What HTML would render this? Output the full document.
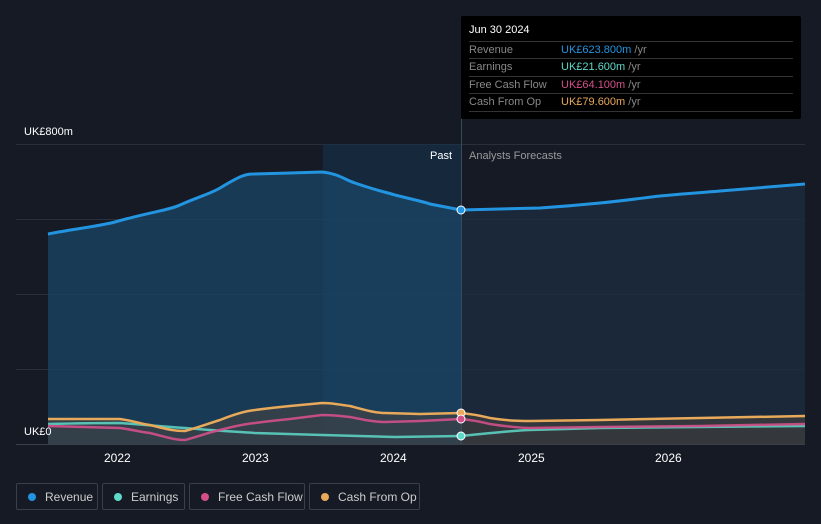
<!DOCTYPE html><html><head><style>
body{margin:0;width:821px;height:524px;background:#151a24;font-family:"Liberation Sans",sans-serif;overflow:hidden;position:relative}
.t{position:absolute;font-size:11px;color:#fff}
.tip{position:absolute;left:461px;top:16px;width:340px;height:103px;background:#000;border-radius:2px}
.tip .r{position:absolute;left:8px;width:324px;border-top:1px solid #333;font-size:11px;color:#888;height:17px;line-height:17px}
.tip .r span{position:absolute;left:92px}
.lg{position:absolute;top:483px;height:27px;border:1px solid #3a3f4a;border-radius:2px;font-size:12px;color:#ccc;line-height:27px;box-sizing:border-box}
.lg i{position:absolute;left:11px;top:9px;width:8px;height:8px;border-radius:50%}
.lg b{font-weight:normal;position:absolute;left:28px}
</style></head><body>
<svg width="821" height="524" style="position:absolute;left:0;top:0">
<defs><linearGradient id="g" x1="0" y1="0" x2="0" y2="1"><stop offset="0" stop-color="#1b4a72" stop-opacity=".8"/><stop offset="1" stop-color="#1b3550" stop-opacity=".6"/></linearGradient></defs>
<g stroke="#2a303b" stroke-width="1"><line x1="16" y1="144.5" x2="805" y2="144.5"/><line x1="16" y1="219.5" x2="805" y2="219.5"/><line x1="16" y1="294.5" x2="805" y2="294.5"/><line x1="16" y1="369.5" x2="805" y2="369.5"/></g>
<rect x="323" y="144" width="138" height="300" fill="#16324c" opacity=".6"/>
<path d="M48,234 C80,228 100,226 115,222 C150,212 170,210 180,205 C200,196 210,194 220,188 C240,176 245,174 253,174 L290,173 L322,172 C340,174 345,180 355,183 C375,190 385,192 395,195 C415,200 425,202 430,204 L461,210 L461,444 L48,444Z" fill="#1a4566" opacity=".75"/>
<path d="M461,210 L500,209 L540,208 C570,206 590,204 600,203 C630,200 650,197 660,196 C690,193 710,192 720,191 L805,184 L805,444 L461,444Z" fill="#1c2c3e" opacity=".8"/>
<path d="M48,419 L120,419 C135,421 140,424 150,425 C170,430 175,431 185,431 C200,427 210,423 220,420 C235,414 245,411 255,410 C270,408 280,407 290,406 L322,403 C335,403 340,405 350,406 C365,410 375,413 385,413 L420,414 L461,413 L490,418 L530,421 L600,420 L700,418 L805,416 L805,444 L48,444Z" fill="#4a4440" opacity=".55"/>
<line x1="16" y1="444.5" x2="805" y2="444.5" stroke="#3a3f4a"/>
<line x1="461.5" y1="119" x2="461.5" y2="444" stroke="#3a4a5a"/>
<path d="M48,234 C80,228 100,226 115,222 C150,212 170,210 180,205 C200,196 210,194 220,188 C240,176 245,174 253,174 L290,173 L322,172 C340,174 345,180 355,183 C375,190 385,192 395,195 C415,200 425,202 430,204 L461,210 L500,209 L540,208 C570,206 590,204 600,203 C630,200 650,197 660,196 C690,193 710,192 720,191 L805,184" fill="none" stroke="#2394e0" stroke-width="3"/>
<path d="M48,424 C90,423 110,423 120,423 C160,426 170,427 185,428 C220,431 240,432 255,433 L322,435 L395,437 L461,436 C500,432 520,430 530,430 L600,428 L805,426" fill="none" stroke="#5fd9c8" stroke-width="2.5" opacity=".85"/>
<path d="M48,426 L120,428 C135,430 140,432 150,433 C170,438 175,440 185,440 C200,436 210,432 220,430 C235,426 245,424 255,423 C270,421 280,420 290,419 L322,415 C335,415 340,416 350,417 C365,420 375,422 385,422 L420,421 L461,419 C480,421 485,423 490,424 C510,427 520,428 530,428 L600,427 L700,426 L805,424" fill="none" stroke="#d2508a" stroke-width="2.5" opacity=".9"/>
<path d="M48,419 L120,419 C135,421 140,424 150,425 C170,430 175,431 185,431 C200,427 210,423 220,420 C235,414 245,411 255,410 C270,408 280,407 290,406 L322,403 C335,403 340,405 350,406 C365,410 375,413 385,413 L420,414 L461,413 C480,415 485,417 490,418 C510,421 520,421 530,421 L600,420 L700,418 L805,416" fill="none" stroke="#e8a95a" stroke-width="2.5"/>
<g stroke="#fff" stroke-width="1"><circle cx="461" cy="210" r="4" fill="#2394e0"/><circle cx="461" cy="413" r="4" fill="#e8a95a"/><circle cx="461" cy="419" r="4" fill="#d2508a"/><circle cx="461" cy="436" r="4" fill="#5fd9c8"/></g>
</svg>
<div class="t" style="left:24px;top:126px">UK£800m</div>
<div class="t" style="left:24px;top:426px">UK£0</div>
<div class="t" style="left:430px;top:150px">Past</div>
<div class="t" style="left:469px;top:150px;color:#999">Analysts Forecasts</div>
<div class="t" style="left:104px;top:451px;font-size:12px">2022</div>
<div class="t" style="left:242px;top:451px;font-size:12px">2023</div>
<div class="t" style="left:380px;top:451px;font-size:12px">2024</div>
<div class="t" style="left:518px;top:451px;font-size:12px">2025</div>
<div class="t" style="left:655px;top:451px;font-size:12px">2026</div>
<div class="tip">
<div style="position:absolute;left:8px;top:8px;font-size:11px;color:#fff">Jun 30 2024</div>
<div class="r" style="top:25px">Revenue<span><em style="font-style:normal;color:#2394e0">UK£623.800m</em> /yr</span></div>
<div class="r" style="top:42px">Earnings<span><em style="font-style:normal;color:#5fd9c8">UK£21.600m</em> /yr</span></div>
<div class="r" style="top:60px">Free Cash Flow<span><em style="font-style:normal;color:#d2508a">UK£64.100m</em> /yr</span></div>
<div class="r" style="top:77px">Cash From Op<span><em style="font-style:normal;color:#e8a95a">UK£79.600m</em> /yr</span></div>
<div class="r" style="top:95px;height:0"></div>
</div>
<div class="lg" style="left:16px;width:82px"><i style="background:#2394e0"></i><b>Revenue</b></div>
<div class="lg" style="left:102px;width:83px"><i style="background:#5fd9c8"></i><b>Earnings</b></div>
<div class="lg" style="left:189px;width:116px"><i style="background:#d2508a"></i><b>Free Cash Flow</b></div>
<div class="lg" style="left:309px;width:111px"><i style="background:#e8a95a"></i><b>Cash From Op</b></div>
</body></html>
